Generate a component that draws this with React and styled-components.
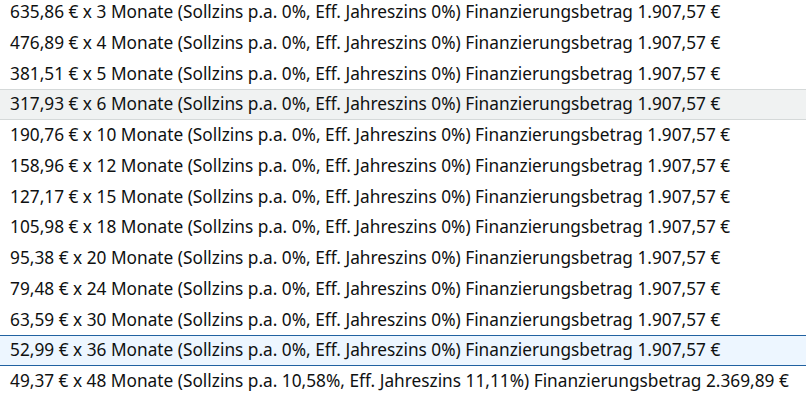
import React from 'react';
import styled, { createGlobalStyle } from 'styled-components';

const GlobalStyle = createGlobalStyle`
  html, body {
    margin: 0;
    padding: 0;
    background: #ffffff;
    overflow: hidden;
  }
`;

const List = styled.ul`
  list-style: none;
  margin: -3.25px 0 0 0;
  padding: 0;
  width: 806px;
  font-family: "Noto Sans", "DejaVu Sans", sans-serif;
  font-size: 17.28px;
  color: #0f1111;
`;

const Option = styled.li`
  box-sizing: border-box;
  height: 30.75px;
  display: flex;
  align-items: center;
  padding: 0 0 1px 10px;
  white-space: nowrap;
  border-top: 1px solid ${(p) => (p.$state === 'hover' ? '#d5d9d9' : p.$state === 'selected' ? '#2162a1' : 'transparent')};
  border-bottom: 1px solid ${(p) => (p.$state === 'hover' ? '#d5d9d9' : p.$state === 'selected' ? '#2162a1' : 'transparent')};
  background: ${(p) => (p.$state === 'hover' ? '#f0f2f2' : p.$state === 'selected' ? '#edf6ff' : 'transparent')};
`;

const plans = [
  ['635,86', 3],
  ['476,89', 4],
  ['381,51', 5],
  ['317,93', 6, 'hover'],
  ['190,76', 10],
  ['158,96', 12],
  ['127,17', 15],
  ['105,98', 18],
  ['95,38', 20],
  ['79,48', 24],
  ['63,59', 30],
  ['52,99', 36, 'selected'],
];

const App = () => (
  <>
    <GlobalStyle />
    <List>
      {plans.map(([rate, months, state]) => (
        <Option key={months} $state={state}>
          {rate} € x {months} Monate (Sollzins p.a. 0%, Eff. Jahreszins 0%) Finanzierungsbetrag 1.907,57 €
        </Option>
      ))}
      <Option>
        49,37 € x 48 Monate (Sollzins p.a. 10,58%, Eff. Jahreszins 11,11%) Finanzierungsbetrag 2.369,89 €
      </Option>
    </List>
  </>
);

export default App;
